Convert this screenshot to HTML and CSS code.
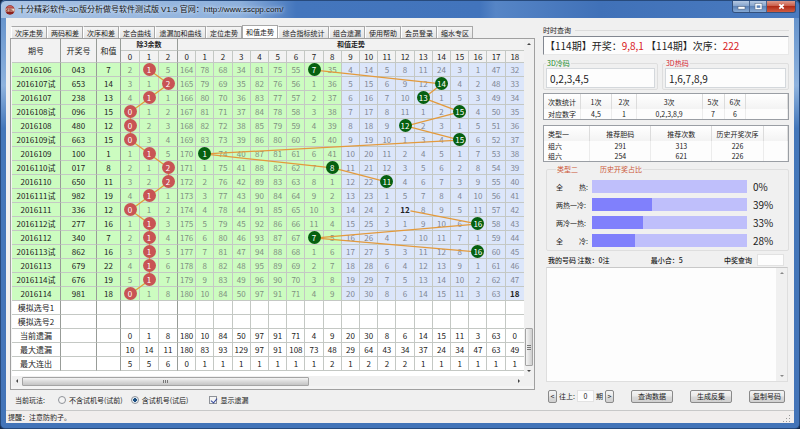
FILE: index.html
```html
<!DOCTYPE html>
<html lang="zh-CN">
<head>
<meta charset="utf-8">
<title>十分精彩软件</title>
<link rel="stylesheet" href="styles.css">
</head>
<body>
<div class="window">
  <header class="titlebar">
    <svg class="logo" viewBox="0 0 20 20" aria-hidden="true">
      <circle cx="10" cy="10" r="9.5" fill="#8d1f1c"/>
      <path d="M2.5 5.5a9 9 0 0 1 15 0z" fill="#c9605a"/>
      <rect x="1" y="7" width="18" height="6" fill="#f3dfc9"/>
      <path d="M3 8.5h3v1.5H3v2h3M8 8.5h3.500v3.500H8zM13.500 8.500v3.500h3.500" fill="none" stroke="#7c1715" stroke-width="1.200"/>
    </svg>
    <h1 class="title">十分精彩软件-3D版分析做号软件测试版 V1.9 官网：http://www.sscpp.com/</h1>
    <div class="caption-buttons">
      <button class="cap cap-min" aria-label="最小化"><svg viewBox="0 0 10 8"><rect x="1" y="4" width="8" height="3" fill="#fff" stroke="#4a5a74" stroke-width=".6"/></svg></button>
      <button class="cap cap-max" aria-label="最大化"><svg viewBox="0 0 10 8"><rect x="2" y="1.500" width="6" height="5" fill="none" stroke="#fff" stroke-width="1.800"/><rect x="1" y=".6" width="8" height="6.900" fill="none" stroke="#4a5a74" stroke-width=".5"/></svg></button>
      <button class="cap cap-close" aria-label="关闭"><svg viewBox="0 0 10 8"><path d="M2.500 1.500l5 5M7.500 1.500l-5 5" stroke="#fff" stroke-width="2"/></svg></button>
    </div>
  </header>

  <div class="client">
    <main class="body">
      <section class="left">
        <nav class="tabs">
          <button class="tab">次序走势</button>
          <button class="tab">两码和差</button>
          <button class="tab">次序和差</button>
          <button class="tab">定合曲线</button>
          <button class="tab tab-wide">遗漏加和曲线</button>
          <button class="tab">定位走势</button>
          <button class="tab tab-active">和值走势</button>
          <button class="tab tab-wide">综合指标统计</button>
          <button class="tab">组合遗漏</button>
          <button class="tab">使用帮助</button>
          <button class="tab">会员登录</button>
          <button class="tab">缩水专区</button>
        </nav>
        <div class="panel">
          <div class="panel-row">
            <div class="chart" id="chart">
              <table class="trend">
                <colgroup>
                  <col class="w-issue"><col class="w-draw"><col class="w-sum">
                  <col class="w-mod"><col class="w-mod"><col class="w-mod">
                  <col span="19">
                </colgroup>
                <thead>
                  <tr><th rowspan="2" class="strong">期号</th><th rowspan="2" class="strong">开奖号</th><th rowspan="2" class="strong">和值</th><th colspan="3" class="strong group">除3余数</th><th colspan="19" class="group">和值走势</th></tr>
                  <tr id="numbers"></tr>
                </thead>
                <tbody id="rows"></tbody>
              </table>
              <svg class="links" id="links" aria-hidden="true"></svg>
            </div>
            <div class="vscroll">
              <i class="arrow up"></i>
              <i class="vthumb"></i>
              <i class="arrow down"></i>
            </div>
          </div>
          <div class="hscroll">
            <i class="arrow leftward"></i>
            <i class="hthumb"></i>
            <i class="arrow rightward"></i>
          </div>
        </div>
        <div class="options">
          <span class="options-title">当前玩法:</span>
          <label class="choice"><input type="radio" name="mode">不含试机号(试前)</label>
          <label class="choice"><input type="radio" name="mode" checked>含试机号(试后)</label>
          <label class="choice choice-check"><input type="checkbox" checked>显示遗漏</label>
        </div>
      </section>

      <aside class="right">
        <h2 class="side-title">时时查询</h2>
        <p class="latest">【114期】开奖：<em>9,8,1</em> 【114期】次序：<em>222</em></p>

        <div class="codes">
          <fieldset class="code cold">
            <legend><label for="cold">3D冷码</label></legend>
            <input id="cold" type="text" value="0,2,3,4,5">
          </fieldset>
          <fieldset class="code hot">
            <legend><label for="hot">3D热码</label></legend>
            <input id="hot" type="text" value="1,6,7,8,9">
          </fieldset>
        </div>

        <table class="grid counts">
          <colgroup><col class="c15"><col class="c13"><col class="c10"><col class="c27"><col class="c9"><col class="c9"><col></colgroup>
          <thead><tr><th>次数统计</th><th>1次</th><th>2次</th><th>3次</th><th>5次</th><th>6次</th><th></th></tr></thead>
          <tbody><tr><td>对应数字</td><td>4,5</td><td>1</td><td>0,2,3,8,9</td><td>7</td><td>6</td><td></td></tr></tbody>
        </table>

        <table class="grid types">
          <colgroup><col class="c19"><col class="c25"><col class="c25"><col class="c21"><col></colgroup>
          <thead><tr><th>类型一</th><th>推荐胆码</th><th>推荐次数</th><th>历史开奖次序</th><th></th></tr></thead>
          <tbody>
            <tr><td>组六</td><td>291</td><td>313</td><td>226</td><td></td></tr>
            <tr><td>组六</td><td>254</td><td>621</td><td>226</td><td></td></tr>
          </tbody>
        </table>

        <fieldset class="shares">
          <legend><span>类型二</span><span>历史开奖占比</span></legend>
          <div class="share"><span class="share-name"><b>全</b><b>热:</b></span><div class="bar"><i style="width:0%"></i></div><span class="pct">0%</span></div>
          <div class="share"><span class="share-name"><b>两热一冷:</b></span><div class="bar"><i style="width:39%"></i></div><span class="pct">39%</span></div>
          <div class="share"><span class="share-name"><b>两冷一热:</b></span><div class="bar"><i style="width:33%"></i></div><span class="pct">33%</span></div>
          <div class="share"><span class="share-name"><b>全</b><b>冷:</b></span><div class="bar"><i style="width:28%"></i></div><span class="pct">28%</span></div>
        </fieldset>

        <section class="mine">
          <div class="mine-head">
            <label for="mine">我的号码 注数：0注</label>
            <span>最小合：5</span>
            <label class="lookup">中奖查询<input type="text"></label>
          </div>
          <div class="mine-box">
            <textarea id="mine"></textarea>
            <div class="mine-scroll"><i class="arrow up"></i><i class="arrow down"></i></div>
          </div>
        </section>

        <div class="actions">
          <div class="stepper">
            <button class="btn step" aria-label="上一期">&lt;</button>
            <label for="back">往上:</label>
            <input id="back" type="text" value="0">
            <span>期</span>
            <button class="btn step" aria-label="下一期">&gt;</button>
          </div>
          <button class="btn">查询数据</button>
          <button class="btn">生成反集</button>
          <button class="btn btn-tight">复制号码</button>
        </div>
      </aside>
    </main>
    <footer class="status">
      <span>提醒：注意防豹子。</span>
      <svg class="grip" viewBox="0 0 8 8" aria-hidden="true"><path d="M6 0h1v1H6zM3 3h1v1H3zM6 3h1v1H6zM0 6h1v1H0zM3 6h1v1H3zM6 6h1v1H6z" fill="#999"/></svg>
    </footer>
  </div>
</div>
<script src="trend.js"></script>
</body>
</html>
```
FILE: styles.css
```css
* { box-sizing: border-box; }

body {
  margin: 0;
  font: 7px/10px "Noto Sans CJK SC", sans-serif;
  color: #222;
  background: #16294a;
}

button, input, textarea { font: inherit; color: inherit; margin: 0; }
i { display: block; flex: none; }

.window {
  display: flex;
  flex-direction: column;
  min-height: 100vh;
  padding: 0 5px 5px;
  border: 1px solid #274a7c;
  border-top: 0;
  border-radius: 5px;
  background: linear-gradient(#5c8cc8, #8fb3de 20%, #4377ba 30%, #4374b8);
}

/* Title bar */
.titlebar {
  display: flex;
  align-items: center;
  height: 18px;
  margin: 0 -5px;
  padding: 0 3px 0 4px;
  border-top: 1px solid #274a7c;
  border-radius: 5px 5px 0 0;
  background: linear-gradient(90deg, #a9c3e4, #8db0dc 30%, #4476bd 37%, #4274bc 60%, #5685c6 62%, #4071b8 75%, #4a7bc0);
}
.logo { width: 10px; height: 10px; margin-right: 3px; }
.title {
  flex: 1;
  margin: 0;
  font-family: "Liberation Sans", "Noto Sans CJK SC", sans-serif;
  font-size: 8px;
  font-weight: 400;
  color: #111;
  text-shadow: 0 0 3px #d8e6f6, 0 0 5px #d8e6f6;
  white-space: nowrap;
}
.caption-buttons {
  display: flex;
  align-self: flex-start;
  height: 12px;
  border: 1px solid #33507c;
  border-top: 0;
  border-radius: 0 0 3px 3px;
  overflow: hidden;
}
.cap {
  display: flex;
  align-items: center;
  justify-content: center;
  width: 17px;
  padding: 0;
  border: 0;
  border-right: 1px solid #4a6690;
  background: linear-gradient(#b5c8e2, #86a4cc 45%, #5d83b8 50%, #86a9d4);
}
.cap svg { width: 9px; height: 7px; }
.cap-close {
  width: 28px;
  border-right: 0;
  background: linear-gradient(#dd9a8c, #cb5c48 45%, #b02c18 50%, #cf5c42);
}

/* Client area */
.client {
  display: flex;
  flex: 1;
  flex-direction: column;
  background: #f0f0f0;
}
.body {
  display: flex;
  flex: 1;
  gap: 8px;
  padding: 7px 5px 0 4px;
}
.left { display: flex; flex: 1; flex-direction: column; min-width: 0; }

.tabs { display: flex; height: 13px; padding-left: 1px; }
.tab {
  width: 36px;
  margin-top: 1px;
  padding: 0;
  border: 1px solid #a8a8a8;
  border-left-color: #fff;
  border-bottom: 0;
  background: linear-gradient(#f5f5f5, #e4e4e4);
  white-space: nowrap;
}
.tab-wide { width: 51px; }
.tab-active { margin-top: 0; border-left-color: #a8a8a8; background: #fff; }

.panel {
  display: flex;
  flex: 1;
  flex-direction: column;
  padding: 0 0 3px 1px;
  border: 1px solid #a0a0a0;
  background: #f4f4f4;
}
.panel-row { display: flex; flex: 1; }
.chart { position: relative; flex: 1; background: #fff; }
.links {
  position: absolute;
  inset: 0;
  width: 100%;
  height: 100%;
  stroke: #e39a3c;
  stroke-width: 1.3;
}

/* Trend table */
.trend {
  width: 100%;
  table-layout: fixed;
  border-collapse: separate;
  border-spacing: 0;
  font-size: 8px;
  text-align: center;
}
.w-issue { width: 49px; }
.w-draw { width: 36px; }
.w-sum { width: 24px; }
.w-mod { width: 19px; }
.trend th, .trend td {
  height: 14px;
  padding: 0;
  border: solid #c4c8c4;
  border-width: 0 1px 1px 0;
  line-height: 13px;
  white-space: nowrap;
}
.trend th {
  height: 12px;
  line-height: 11px;
  font-weight: 400;
  background: #f2f2f2;
}
.trend th.group { font-size: 7px; font-weight: 700; }
.trend .strong { border-right-color: #989c98; }
.trend tr > :last-child { border-right: 0; }
.trend .green { background: #ccfcc0; }
.trend .blue { background: #dce6fa; }
.trend .miss { color: #7f8f80; }
.trend .blue.miss { color: #808694; }
.plain-hit { font-weight: 700; }
.ball {
  position: relative;
  z-index: 1;
  display: block;
  width: 13px;
  height: 13px;
  margin: 0 auto;
  border-radius: 50%;
  color: #fff;
}
.ball-red { background: #c85454; }
.ball-green { background: #066010; }

/* Scroll bars */
.vscroll {
  display: flex;
  flex-direction: column;
  align-items: center;
  width: 10px;
  padding: 4px 0 4px;
  background: #f0f0f0;
}
.vthumb {
  width: 8px;
  height: 38px;
  margin: auto 0 4px;
  border: 1px solid #a4a4a4;
  border-radius: 1px;
  background:
    repeating-linear-gradient(#777 0 1px, transparent 1px 2px) center / 4px 5px no-repeat,
    linear-gradient(90deg, #f4f4f4, #cfcfcf);
}
.hscroll {
  display: flex;
  align-items: center;
  gap: 4px;
  height: 10px;
  padding: 0 14px 0 4px;
  background: #f0f0f0;
}
.hthumb {
  width: 57%;
  height: 9px;
  border: 1px solid #a4a4a4;
  border-radius: 1px;
  background:
    repeating-linear-gradient(90deg, #777 0 1px, transparent 1px 2px) center / 5px 3px no-repeat,
    linear-gradient(#f4f4f4, #dcdcdc 45%, #c4c4c4);
}
.arrow { width: 0; height: 0; border: 2px solid transparent; }
.up { border-top: 0; border-bottom-color: #444; }
.down { border-bottom: 0; border-top-color: #444; }
.leftward { border-left: 0; border-right-color: #444; }
.rightward { margin-left: auto; border-right: 0; border-left-color: #444; }

/* Options under the table */
.options {
  display: flex;
  align-items: center;
  height: 20px;
  padding-left: 5px;
}
.options-title { width: 43px; }
.choice { display: flex; align-items: center; gap: 3px; margin-right: 8px; }
.choice input {
  appearance: none;
  width: 8px;
  height: 8px;
  border: 1px solid #8e9298;
  background: #f4f4f4;
}
.choice input[type="radio"] { border-radius: 50%; }
.choice input[type="radio"]:checked {
  background: radial-gradient(circle, #1c4f80 0 2px, #e4edf5 2px);
}
.choice-check { margin-left: 13px; }
.choice-check input:checked::after {
  content: "";
  display: block;
  width: 3px;
  height: 5px;
  margin-left: 2px;
  border: solid #34489c;
  border-width: 0 1px 1px 0;
  transform: rotate(40deg);
}

/* Query panel */
.right {
  display: flex;
  flex-direction: column;
  width: 246px;
}
.side-title {
  display: flex;
  align-items: center;
  gap: 4px;
  margin: 0;
  font-size: 7px;
  font-weight: 400;
  line-height: 11px;
}
.side-title::after { content: ""; flex: 1; border-top: 1px solid #dcdcdc; }
.latest {
  margin: 0;
  padding: 0 0 0 1px;
  height: 19px;
  border: 1px solid #828790;
  border-right-color: #e8e8e8;
  border-bottom-color: #e8e8e8;
  background: #fdfdfd;
  font-size: 10px;
  line-height: 18px;
  white-space: pre;
}
.latest em { font-style: normal; color: #d8201c; }

fieldset {
  min-width: 0;
  margin: 0;
  padding: 0;
  border: 1px solid #dedede;
  border-radius: 2px;
}
.codes { display: flex; gap: 4px; margin-top: 3px; }
.code { padding: 0 2px 1px; }
.code legend { padding: 0 1px; line-height: 10px; }
.cold { flex: 9; color: #1c8c2c; }
.hot { flex: 10; color: #d42430; }
.code input {
  display: block;
  width: 100%;
  height: 20px;
  padding: 0 3px;
  border: 1px solid #d4d8dc;
  background: #fdfdfd;
  color: #222;
  font-size: 10px;
}

.grid {
  width: 100%;
  table-layout: fixed;
  border: 1px solid #9a9ea4;
  border-spacing: 0;
  background: #fdfdfd;
  text-align: center;
}
.grid th, .grid td { height: 10px; padding: 0; border-right: 1px solid #ececec; font-weight: 400; line-height: 10px; white-space: nowrap; }
.grid th { height: 15px; background: linear-gradient(#fff, #f3f3f3); border-right-color: #dcdcdc; }
.grid tr > :first-child { padding-left: 4px; text-align: left; }
.counts { margin-top: 3px; }
.types { margin-top: 5px; }
.c9 { width: 9%; }
.c10 { width: 10%; }
.c13 { width: 13%; }
.c15 { width: 15%; }
.c19 { width: 19%; }
.c21 { width: 21%; }
.c25 { width: 25%; }
.c27 { width: 27%; }

.shares {
  display: flex;
  flex-direction: column;
  gap: 5px;
  margin: 2px 0 0 3px;
  padding: 6px 14px 3px 9px;
}
.shares legend {
  display: flex;
  gap: 22px;
  padding: 0 1px;
  color: #cc5838;
}
.share { display: flex; align-items: center; height: 13px; }
.share-name { display: flex; justify-content: space-between; width: 32px; margin-right: 4px; }
.share-name b { font-weight: 400; }
.bar { flex: 1; height: 13px; background: #bfbffb; }
.bar i { height: 100%; background: #8080fc; }
.pct { width: 27px; padding-left: 6px; font-size: 10px; }

.mine {
  display: flex;
  flex: 1;
  flex-direction: column;
  margin: 2px 0 0 3px;
}
.mine-head {
  display: flex;
  align-items: center;
  justify-content: space-between;
  height: 14px;
  padding: 0 5px 0 2px;
  font-weight: 500;
}
.lookup { display: flex; align-items: center; gap: 5px; }
.lookup input { width: 27px; height: 12px; padding: 0; border: 1px solid #e2e2e2; background: #fdfdfd; }
.mine-box {
  display: flex;
  flex: 1;
  border: 1px solid #dedede;
  border-top-color: #c8c8c8;
  margin-right: 1px;
}
.mine-box textarea { flex: 1; padding: 2px; border: 0; background: #fdfdfd; resize: none; outline: 0; }
.mine-scroll {
  display: flex;
  flex-direction: column;
  align-items: center;
  justify-content: space-between;
  width: 11px;
  padding: 4px 0;
}
.mine-scroll .up { border-bottom-color: #888; }
.mine-scroll .down { border-top-color: #888; }

/* Bottom buttons */
.actions {
  display: flex;
  align-items: center;
  justify-content: space-between;
  height: 28px;
  padding: 0 4px 0 5px;
}
.stepper { display: flex; align-items: center; gap: 2px; }
.stepper input { width: 17px; height: 12px; padding: 0; border: 1px solid #e2e2e2; background: #fdfdfd; text-align: center; }
.btn {
  height: 13px;
  padding: 0 6px;
  border: 1px solid #8a8a8a;
  border-radius: 2px;
  background: linear-gradient(#f4f4f4, #e8e8e8 48%, #dadada 52%, #d0d0d0);
  line-height: 10px;
}
.btn-tight { padding: 0 3px; }
.btn.step { width: 9px; padding: 0; }

/* Status bar */
.status {
  display: flex;
  align-items: center;
  justify-content: space-between;
  height: 13px;
  padding: 0 3px 0 2px;
  border-top: 1px solid #c8c8c8;
  background: #f1eeed;
}
.grip { width: 8px; height: 8px; align-self: flex-end; }
```
FILE: trend.js
```js
// Draws as [issue, number, sum]; a miss counter grows by one per row and resets on a hit.
const draws = [
  ["2016106", "043", 7], ["2016107试", "653", 14], ["2016107", "238", 13],
  ["2016108试", "096", 15], ["2016108", "480", 12], ["2016109试", "663", 15],
  ["2016109", "100", 1], ["2016110试", "017", 8], ["2016110", "650", 11],
  ["2016111试", "982", 19], ["2016111", "336", 12], ["2016112试", "277", 16],
  ["2016112", "340", 7], ["2016113试", "862", 16], ["2016113", "679", 22],
  ["2016114试", "676", 19], ["2016114", "981", 18]
];
const modMiss = [1, 0, 4];
const sumMiss = [163, 77, 67, 33, 80, 74, 54, 0, 34, 3, 13, 4, 7, 10, 23, 2, 0, 46, 31];
const unmarked = ["2016111", "2016114"];

const summary = [
  ["模拟选号1"],
  ["模拟选号2"],
  ["当前遗漏", 0, 1, 8, 180, 10, 84, 50, 97, 91, 71, 4, 9, 20, 30, 8, 6, 14, 15, 11, 3, 63, 0],
  ["最大遗漏", 10, 14, 11, 180, 83, 93, 129, 97, 91, 108, 73, 48, 29, 64, 43, 34, 37, 24, 34, 47, 63, 49],
  ["最大连出", 5, 5, 6, 0, 1, 1, 1, 1, 1, 1, 1, 2, 1, 2, 2, 2, 1, 1, 1, 1, 1, 1]
];

const body = document.getElementById("rows");
const modPath = [];
const sumPath = [];

function addCell(row, content, className) {
  const cell = document.createElement("td");
  cell.className = className || "";
  if (content instanceof Node) cell.append(content);
  else cell.textContent = content;
  row.append(cell);
  return cell;
}

function mark(text, className) {
  const span = document.createElement("span");
  span.className = className;
  span.textContent = text;
  return span;
}

const numbers = document.getElementById("numbers");
for (let i = 0; i < 22; i++) {
  const th = document.createElement("th");
  th.textContent = i < 3 ? i : i - 3;
  if (i === 2) th.className = "strong";
  numbers.append(th);
}

draws.forEach(([issue, number, sum]) => {
  const row = body.insertRow();
  [issue, number, sum].forEach(text => addCell(row, text, "green strong"));
  modMiss.forEach((_, i) => {
    const edge = i === 2 ? " strong" : "";
    if (sum % 3 === i) {
      modMiss[i] = 0;
      modPath.push(addCell(row, mark(i, "ball ball-red"), "green" + edge));
    } else {
      addCell(row, ++modMiss[i], "green miss" + edge);
    }
  });
  let hit = null;
  sumMiss.forEach((_, i) => {
    const zone = i < 9 ? "green" : "blue";
    if (sum === i) {
      sumMiss[i] = 0;
      const style = unmarked.includes(issue) ? "plain-hit" : "ball ball-green";
      hit = addCell(row, mark(i, style), zone);
    } else {
      addCell(row, ++sumMiss[i], zone + " miss");
    }
  });
  sumPath.push(hit);
});

summary.forEach(values => {
  const row = body.insertRow();
  addCell(row, values[0], "strong");
  addCell(row, "", "strong");
  addCell(row, "", "strong");
  for (let i = 1; i <= 22; i++) addCell(row, values[i] ?? "", i === 3 ? "strong" : "");
});

// Joins each hit with the one in the next row, from rim to rim.
function drawLinks() {
  const svg = document.getElementById("links");
  const origin = document.getElementById("chart").getBoundingClientRect();
  svg.replaceChildren();
  [modPath, sumPath].forEach(path => {
    for (let i = 1; i < path.length; i++) {
      if (!path[i - 1] || !path[i]) continue;
      const [a, b] = [path[i - 1], path[i]].map(cell => {
        const r = cell.getBoundingClientRect();
        return { x: r.left + r.width / 2 - origin.left, y: r.top + r.height / 2 - origin.top };
      });
      const length = Math.hypot(b.x - a.x, b.y - a.y);
      const dx = (b.x - a.x) / length * 5;
      const dy = (b.y - a.y) / length * 5;
      const line = document.createElementNS("http://www.w3.org/2000/svg", "line");
      line.setAttribute("x1", a.x + dx);
      line.setAttribute("y1", a.y + dy);
      line.setAttribute("x2", b.x - dx);
      line.setAttribute("y2", b.y - dy);
      svg.append(line);
    }
  });
}
drawLinks();
window.addEventListener("resize", drawLinks);
```
